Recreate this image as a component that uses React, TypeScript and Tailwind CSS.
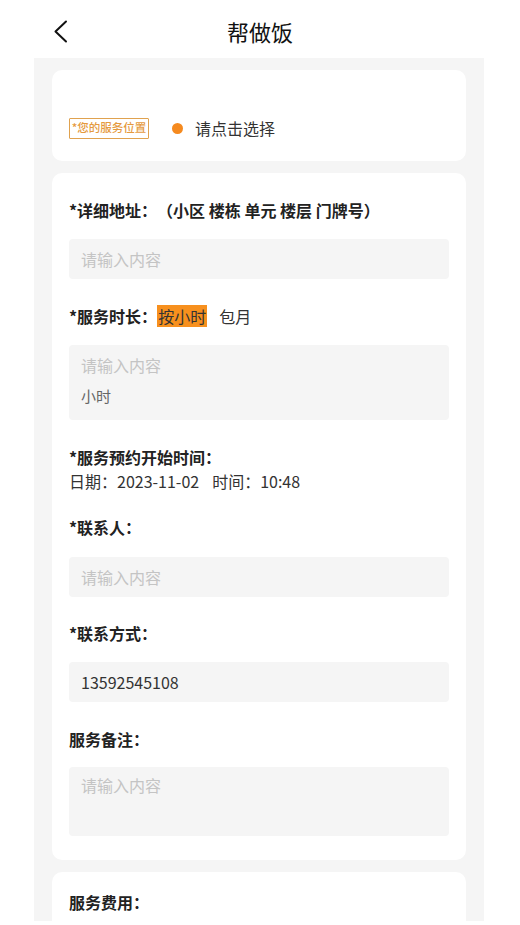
import React from "react";

const font = { fontFamily: '"Noto Sans CJK SC", "Noto Sans", sans-serif' };

function Label({ children, className = "" }: { children: React.ReactNode; className?: string }) {
  return (
    <div className={`text-[16px] leading-[24px] font-bold text-[#222] ${className}`}>{children}</div>
  );
}

function Input({ className = "", children }: { className?: string; children: React.ReactNode }) {
  return (
    <div className={`h-[40px] rounded-[4px] bg-[#f5f5f5] px-[12px] flex items-center text-[16px] ${className}`}>
      {children}
    </div>
  );
}

export default function App() {
  return (
    <div className="w-[520px] h-[925px] bg-white overflow-hidden [text-spacing-trim:space-all]" style={font}>
      <div className="h-[58px] relative flex items-center justify-center">
        <svg className="absolute left-[52px] top-[19px]" width="18" height="25" viewBox="0 0 18 25" fill="none">
          <path d="M14 2.5 L3.5 12.5 L14 22.5" stroke="#111" strokeWidth="2" strokeLinecap="round" strokeLinejoin="round" />
        </svg>
        <div className="text-[22px] text-[#111] leading-[30px] mt-[4px]">帮做饭</div>
      </div>
      <div className="ml-[34px] w-[450px] h-[863px] overflow-hidden bg-[#f5f5f5] px-[18px] pt-[12px]">
        <div className="h-[91px] rounded-[10px] bg-white px-[17px] pt-[46px]">
          <div className="flex items-center">
            <div className="h-[21px] w-[80px] border border-[#e0a24f] rounded-[1px] flex items-center justify-center text-[11.5px] font-medium text-[#e59a3e] leading-none">
              *您的服务位置
            </div>
            <div className="ml-[23px] w-[11px] h-[11px] rounded-full bg-[#f58a1f]" />
            <div className="ml-[12px] text-[16px] text-[#333] leading-[24px]">请点击选择</div>
          </div>
        </div>

        <div className="mt-[12px] rounded-[10px] bg-white px-[17px] pt-[25px] pb-[24px]">
          <Label>*详细地址：（小区 楼栋 单元 楼层 门牌号）</Label>
          <Input className="mt-[17px] text-[#c4c4c4]">请输入内容</Input>

          <div className="mt-[25px] flex items-center">
            <Label>*服务时长：</Label>
            <span className="h-[22px] px-[1px] bg-[#f7901e] text-[16px] leading-[22px] text-[#333]">按小时</span>
            <span className="ml-[12px] text-[16px] leading-[22px] text-[#333]">包月</span>
          </div>
          <div className="mt-[17px] h-[75px] rounded-[4px] bg-[#f5f5f5] px-[12px] pt-[8px]">
            <div className="text-[16px] leading-[24px] text-[#c4c4c4]">请输入内容</div>
            <div className="mt-[7px] text-[15px] leading-[24px] text-[#666]">小时</div>
          </div>

          <Label className="mt-[25px]">*服务预约开始时间：</Label>
          <div className="text-[16px] leading-[24px] text-[#333]">
            日期：2023-11-02<span className="ml-[13px]">时间：10:48</span>
          </div>

          <Label className="mt-[22px]">*联系人：</Label>
          <Input className="mt-[18px] text-[#c4c4c4]">请输入内容</Input>

          <Label className="mt-[24px]">*联系方式：</Label>
          <Input className="mt-[17px] text-[#333]">13592545108</Input>

          <Label className="mt-[25px]">服务备注：</Label>
          <div className="mt-[16px] h-[69px] rounded-[4px] bg-[#f5f5f5] px-[12px] pt-[6px] text-[16px] leading-[24px] text-[#c4c4c4]">
            请输入内容
          </div>
        </div>

        <div className="mt-[12px] h-[120px] rounded-[10px] bg-white px-[17px] pt-[18px]">
          <Label>服务费用：</Label>
        </div>
      </div>
    </div>
  );
}
